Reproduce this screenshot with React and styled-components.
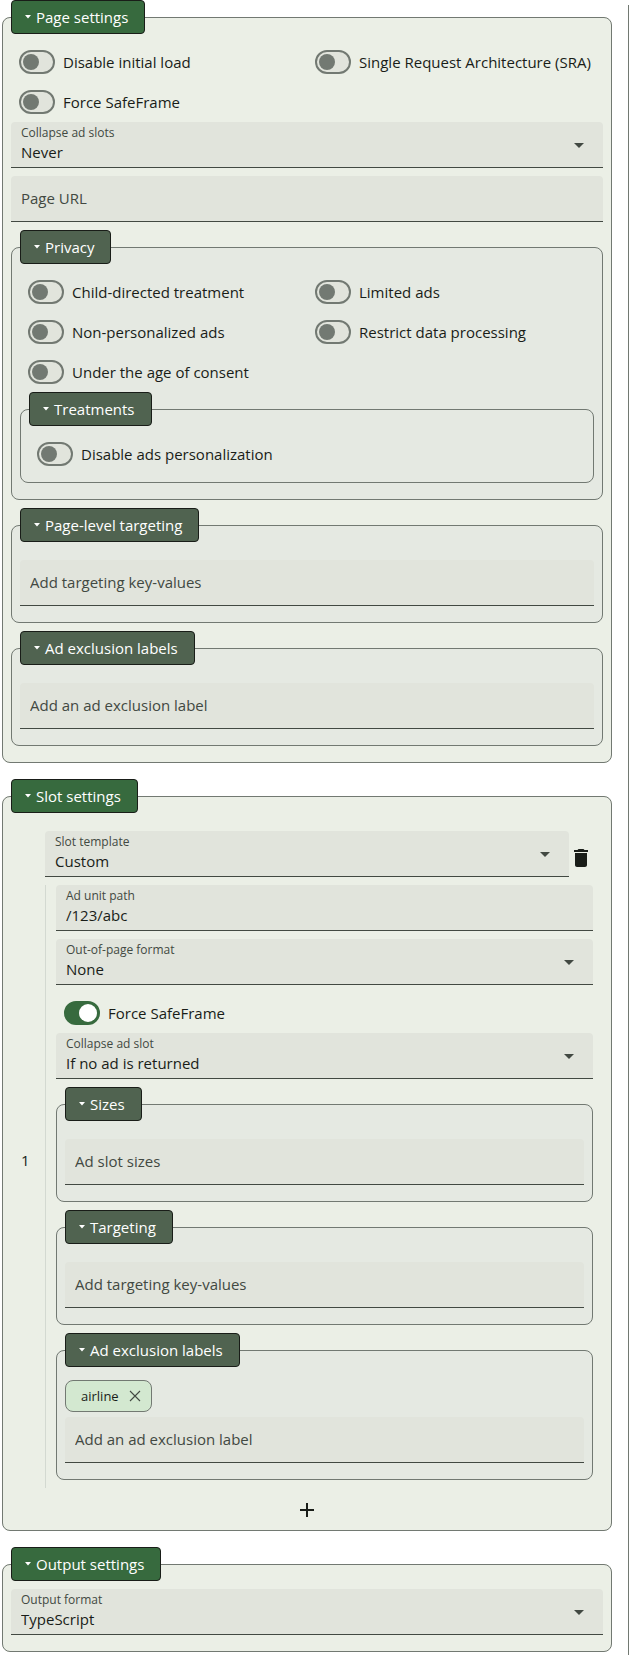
import React, { useId, useState } from "react";
import styled, { createGlobalStyle, css, ThemeProvider } from "styled-components";

const theme = {
  primary: "#376a3e",
  secondary: "#506350",
  onColor: "#ffffff",
  surface: "#ebefe6",
  surfaceInner: "#e5e9e2",
  field: "#e1e4dc",
  chip: "#d3e8d0",
  text: "#191d18",
  textMuted: "#424942",
  outline: "#727972",
  outlineVariant: "#d3d9d1",
};

const GlobalStyle = createGlobalStyle`
  *, *::before, *::after { box-sizing: border-box; }
  body {
    margin: 0;
    background: #fff;
    color: ${theme.text};
    font: 15px/24px "Open Sans", "Liberation Sans", sans-serif;
  }
  button, input, select { font: inherit; color: inherit; }
`;

const Page = styled.div`
  display: grid;
  grid-template-columns: minmax(0, 1fr) 1px;
  column-gap: 16px;
  padding-left: 2px;
`;

const Settings = styled.main`
  display: flex;
  flex-direction: column;
  gap: 16px;
  padding-bottom: 8px;
`;

const PaneDivider = styled.div`
  margin: 5px 0;
  background: ${(p) => p.theme.outline};
`;

const Fieldset = styled.fieldset`
  min-width: 0;
  margin: 0;
  padding: 8px;
  border: 1px solid ${(p) => p.theme.outline};
  border-radius: 8px;
  background: ${(p) => p.theme.surface};

  ${(p) =>
    p.$nested &&
    css`
      margin-bottom: 8px;
      background: ${p.theme.surfaceInner};
    `}
`;

const Legend = styled.legend`
  display: block;
  padding: 0;
`;

const LegendButton = styled.button`
  display: flex;
  align-items: center;
  gap: 5px;
  height: 34px;
  padding: 0 16px 0 13px;
  border: 1px solid ${(p) => p.theme.text};
  border-radius: 4px;
  background: ${(p) => (p.$nested ? p.theme.secondary : p.theme.primary)};
  color: ${(p) => p.theme.onColor};
  cursor: pointer;
`;

const ToggleGrid = styled.div`
  display: grid;
  grid-template-columns: repeat(2, minmax(0, 1fr));
`;

const ToggleLabel = styled.label`
  display: flex;
  align-items: center;
  gap: 8px;
  height: 40px;
  padding-left: 8px;
  white-space: nowrap;
`;

const Switch = styled.input`
  appearance: none;
  display: flex;
  flex: none;
  align-items: center;
  width: 36px;
  height: 24px;
  margin: 0;
  padding: 0 2px;
  border: 2px solid ${(p) => p.theme.outline};
  border-radius: 12px;
  background: ${(p) => p.theme.field};

  &::before {
    content: "";
    width: 16px;
    height: 16px;
    border-radius: 50%;
    background: ${(p) => p.theme.outline};
  }

  &:checked {
    justify-content: flex-end;
    padding: 0 1px;
    border-color: ${(p) => p.theme.primary};
    background: ${(p) => p.theme.primary};
  }

  &:checked::before {
    width: 18px;
    height: 18px;
    background: ${(p) => p.theme.onColor};
  }
`;

const Field = styled.div`
  display: grid;
  flex: 1 1 auto;
  height: 46px;
  margin-bottom: 8px;
  border-bottom: 1px solid ${(p) => p.theme.textMuted};
  border-radius: 4px 4px 0 0;
  background: ${(p) => p.theme.field};

  > * {
    grid-area: 1 / 1;
  }
`;

const FieldLabel = styled.label`
  z-index: 1;
  align-self: start;
  justify-self: start;
  padding: 3px 10px 0;
  color: ${(p) => p.theme.textMuted};
  font-size: 12px;
  line-height: 16px;
  pointer-events: none;
`;

const controlStyle = css`
  appearance: none;
  width: 100%;
  height: 45px;
  margin: 0;
  padding: ${(p) => (p.$labelled ? "15px 10px 0" : "0 10px 2px")};
  border: 0;
  border-radius: 4px 4px 0 0;
  background: transparent;
`;

const Input = styled.input`
  ${controlStyle}

  &::placeholder {
    color: ${(p) => p.theme.textMuted};
    opacity: 1;
  }
`;

const Select = styled.select`
  ${controlStyle}
`;

const DropIcon = styled.svg`
  align-self: center;
  justify-self: end;
  margin-right: 12px;
  fill: ${(p) => p.theme.textMuted};
  pointer-events: none;
`;

const ChipSet = styled.div`
  display: flex;
  flex-wrap: wrap;
  gap: 8px;
  padding: 5px 0;
`;

const Chip = styled.span`
  display: flex;
  align-items: center;
  gap: 7px;
  height: 32px;
  padding: 0 7px 0 15px;
  border: 1px solid ${(p) => p.theme.outline};
  border-radius: 8px;
  background: ${(p) => p.theme.chip};
  font-size: 13px;
`;

const IconButton = styled.button`
  display: flex;
  flex: none;
  align-items: center;
  justify-content: center;
  width: ${(p) => p.$size}px;
  height: ${(p) => p.$size}px;
  padding: 0;
  border: 0;
  background: none;
  fill: ${(p) => p.theme.text};
  cursor: pointer;
`;

const SlotRow = styled.div`
  display: grid;
  grid-template-columns: 24px minmax(0, 1fr);
  align-items: center;
  padding: 10px;
`;

const SlotHeader = styled.div`
  display: flex;
  align-items: center;
`;

const SlotBody = styled.div`
  display: flex;
  flex-direction: column;
  padding-left: 10px;
  border-left: 1px solid ${(p) => p.theme.outlineVariant};

  > * {
    flex: none;
  }
`;

const AddRow = styled.div`
  display: flex;
  justify-content: center;
`;

function Group({ title, nested, children }) {
  const [open, setOpen] = useState(true);
  return (
    <Fieldset $nested={nested}>
      <Legend>
        <LegendButton type="button" $nested={nested} aria-expanded={open} onClick={() => setOpen(!open)}>
          <svg width="6" height="4" viewBox="0 0 6 4" fill="currentColor" aria-hidden="true">
            <path d="M0 0h6L3 3.5z" />
          </svg>
          {title}
        </LegendButton>
      </Legend>
      {open && children}
    </Fieldset>
  );
}

function Toggle({ label, on }) {
  return (
    <ToggleLabel>
      <Switch type="checkbox" role="switch" defaultChecked={on} />
      {label}
    </ToggleLabel>
  );
}

function SelectField({ label, options }) {
  const id = useId();
  return (
    <Field>
      <FieldLabel htmlFor={id}>{label}</FieldLabel>
      <Select id={id} $labelled>
        {options.map((option) => (
          <option key={option}>{option}</option>
        ))}
      </Select>
      <DropIcon width="24" height="24" viewBox="0 0 24 24" aria-hidden="true">
        <path d="M7 10l5 5 5-5z" />
      </DropIcon>
    </Field>
  );
}

function TextField({ label, value }) {
  const id = useId();
  return (
    <Field>
      {value && <FieldLabel htmlFor={id}>{label}</FieldLabel>}
      <Input id={id} type="text" $labelled={Boolean(value)} defaultValue={value} placeholder={label} aria-label={label} />
    </Field>
  );
}

function ChipField({ label, chips = [] }) {
  return (
    <>
      <ChipSet>
        {chips.map((chip) => (
          <Chip key={chip}>
            {chip}
            <IconButton type="button" $size={18} aria-label={`Remove ${chip}`}>
              <svg width="18" height="18" viewBox="0 0 18 18" fill="none" stroke={theme.textMuted} strokeWidth="1.1">
                <path d="M4 4l10 10M14 4L4 14" />
              </svg>
            </IconButton>
          </Chip>
        ))}
      </ChipSet>
      <TextField label={label} />
    </>
  );
}

export default function App() {
  return (
    <ThemeProvider theme={theme}>
      <GlobalStyle />
      <Page>
        <Settings>
          <Group title="Page settings">
            <ToggleGrid>
              <Toggle label="Disable initial load" />
              <Toggle label="Single Request Architecture (SRA)" />
              <Toggle label="Force SafeFrame" />
            </ToggleGrid>
            <SelectField label="Collapse ad slots" options={["Never"]} />
            <TextField label="Page URL" />
            <Group nested title="Privacy">
              <ToggleGrid>
                <Toggle label="Child-directed treatment" />
                <Toggle label="Limited ads" />
                <Toggle label="Non-personalized ads" />
                <Toggle label="Restrict data processing" />
                <Toggle label="Under the age of consent" />
              </ToggleGrid>
              <Group nested title="Treatments">
                <Toggle label="Disable ads personalization" />
              </Group>
            </Group>
            <Group nested title="Page-level targeting">
              <ChipField label="Add targeting key-values" />
            </Group>
            <Group nested title="Ad exclusion labels">
              <ChipField label="Add an ad exclusion label" />
            </Group>
          </Group>

          <Group title="Slot settings">
            <SlotRow>
              <span>1</span>
              <div>
                <SlotHeader>
                  <SelectField label="Slot template" options={["Custom"]} />
                  <IconButton type="button" $size={24} aria-label="Remove slot">
                    <svg width="24" height="24" viewBox="0 0 24 24">
                      <path d="M6 19c0 1.1.9 2 2 2h8c1.1 0 2-.9 2-2V7H6v12zM19 4h-3.5l-1-1h-5l-1 1H5v2h14V4z" />
                    </svg>
                  </IconButton>
                </SlotHeader>
                <SlotBody>
                  <TextField label="Ad unit path" value="/123/abc" />
                  <SelectField label="Out-of-page format" options={["None"]} />
                  <Toggle label="Force SafeFrame" on />
                  <SelectField label="Collapse ad slot" options={["If no ad is returned"]} />
                  <Group nested title="Sizes">
                    <ChipField label="Ad slot sizes" />
                  </Group>
                  <Group nested title="Targeting">
                    <ChipField label="Add targeting key-values" />
                  </Group>
                  <Group nested title="Ad exclusion labels">
                    <ChipField label="Add an ad exclusion label" chips={["airline"]} />
                  </Group>
                </SlotBody>
              </div>
            </SlotRow>
            <AddRow>
              <IconButton type="button" $size={24} aria-label="Add slot">
                <svg width="24" height="24" viewBox="0 0 24 24">
                  <path d="M19 13h-6v6h-2v-6H5v-2h6V5h2v6h6v2z" />
                </svg>
              </IconButton>
            </AddRow>
          </Group>

          <Group title="Output settings">
            <SelectField label="Output format" options={["TypeScript"]} />
          </Group>
        </Settings>
        <PaneDivider />
      </Page>
    </ThemeProvider>
  );
}
